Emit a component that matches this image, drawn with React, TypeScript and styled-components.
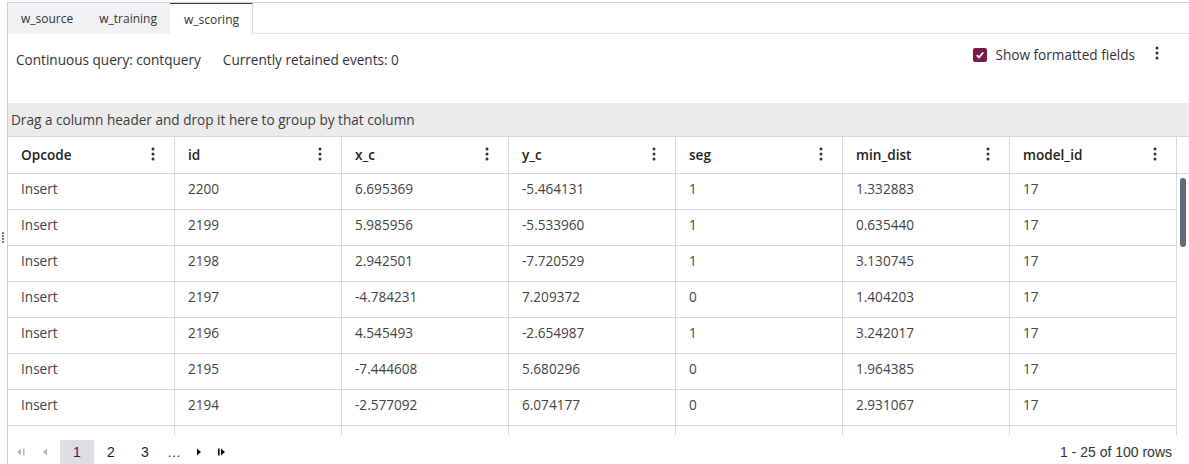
import React from "react";
import styled, { createGlobalStyle } from "styled-components";

const Global = createGlobalStyle`
  html, body { margin: 0; padding: 0; background: #fff; }
  body { font-family: "Open Sans", "Noto Sans", sans-serif; color: #333; overflow: hidden; }
  * { box-sizing: border-box; }
`;

const Page = styled.div`
  position: relative;
  margin: 2px 0 0 7px;
  border-top: 1px solid #cfd4dc;
  border-left: 1px solid #cfd4dc;
  height: 462px;
  overflow: hidden;
  display: flex;
  flex-direction: column;
`;

const TabBar = styled.div`
  display: flex;
  height: 31px;
  flex: none;
`;

const Tab = styled.div<{ $active?: boolean }>`
  height: 31px;
  padding: 0 13px 0 ${(p) => (p.$active ? 14 : 13)}px;
  display: flex;
  align-items: center;
  font-size: 12px;
  color: #333;
  background: ${(p) => (p.$active ? "#fff" : "#f1f2f4")};
  border-top: 1px solid ${(p) => (p.$active ? "#3a3f47" : "#f1f2f4")};
  border-right: ${(p) => (p.$active ? "1px solid #d6d9de" : "none")};
  border-bottom: ${(p) => (p.$active ? "none" : "1px solid #f1f2f4")};
`;

const TabFill = styled.div`
  flex: 1;
  border-bottom: 1px solid #e3e5e8;
`;

const InfoRow = styled.div`
  height: 69px;
  flex: none;
  display: flex;
  align-items: flex-start;
  padding: 15px 0 0 8px;
  font-size: 13.6px;
  color: #333;
`;

const InfoText = styled.span`
  margin-right: 22px;
  line-height: 20px;
  margin-top: 1px;
`;

const Spacer = styled.div`
  flex: 1;
`;

const CheckLabel = styled.label`
  display: flex;
  align-items: center;
  gap: 8px;
  font-size: 13.6px;
  color: #333;
  line-height: 20px;
  margin-top: -4px;
`;

const CheckBox = styled.span`
  width: 14px;
  height: 14px;
  border-radius: 2px;
  background: #7a1a4b;
  display: inline-flex;
  align-items: center;
  justify-content: center;
`;

const MenuBtn = styled.span`
  display: inline-flex;
  margin: -3px 30px 0 20px;
`;

const GroupBar = styled.div`
  height: 34px;
  flex: none;
  background: #ebebeb;
  border-bottom: 1px solid #d6d9de;
  display: flex;
  align-items: center;
  padding: 0 0 0 3px;
  font-size: 13.6px;
  color: #3c3c3c;
`;

const COLS = "repeat(7, 167px) 1fr";

const HeaderRow = styled.div`
  display: grid;
  grid-template-columns: ${COLS};
  height: 37px;
  flex: none;
  border-bottom: 1px solid #d6d9de;
`;

const HeadCell = styled.div`
  display: flex;
  align-items: center;
  justify-content: space-between;
  padding: 0 19px 2px 13px;
  border-right: 1px solid #d6d9de;
  font-size: 13.6px;
  font-weight: 600;
  color: #222;
`;

const GutterHead = styled.div``;

const Body = styled.div`
  display: flex;
  height: 261px;
  flex: none;
  overflow: hidden;
`;

const Rows = styled.div`
  width: 1169px;
  flex: none;
`;

const Row = styled.div`
  display: grid;
  grid-template-columns: repeat(7, 167px);
  height: 36px;
  border-bottom: 1px solid #d6d9de;
`;

const Cell = styled.div`
  display: flex;
  align-items: center;
  padding: 0 13px 6px 13px;
  border-right: 1px solid #d6d9de;
  font-size: 13.6px;
  color: #444;
`;

const Gutter = styled.div`
  flex: 1;
  padding: 4px 0 0 3px;
`;

const Thumb = styled.div`
  width: 6px;
  height: 69px;
  border-radius: 3px;
  background: #5f6b7b;
`;

const Footer = styled.div`
  flex: none;
  height: 34px;
  display: flex;
  align-items: center;
  padding: 0 17px 0 0;
  font-family: "Liberation Sans", Arial, sans-serif;
  font-size: 14px;
`;

const PageNav = styled.span<{ $w?: number }>`
  width: ${(p) => p.$w ?? 26}px;
  height: 24px;
  display: inline-flex;
  align-items: center;
  justify-content: center;
`;

const PageNum = styled.span<{ $active?: boolean }>`
  width: 34px;
  height: 30px;
  display: inline-flex;
  align-items: center;
  justify-content: center;
  margin-top: 6px;
  padding-bottom: 6px;
  background: ${(p) => (p.$active ? "#dcdee2" : "transparent")};
  color: ${(p) => (p.$active ? "#4a1a45" : "#222")};
  font-size: 14px;
`;

const RowCount = styled.span`
  margin-left: auto;
  color: #333;
  font-size: 14px;
`;

const Handle = styled.div`
  position: absolute;
  left: 2px;
  top: 232px;
  display: flex;
  flex-direction: column;
  gap: 1px;
`;

const HandleDot = styled.span`
  width: 2px;
  height: 2px;
  background: #777;
`;

const Kebab = ({ color = "#333" }: { color?: string }) => (
  <svg width="4" height="14" viewBox="0 0 4 14">
    <circle cx="2" cy="2" r="1.5" fill={color} />
    <circle cx="2" cy="7" r="1.5" fill={color} />
    <circle cx="2" cy="12" r="1.5" fill={color} />
  </svg>
);

const Tri = ({ dir, bar, color }: { dir: "l" | "r"; bar?: boolean; color: string }) => (
  <svg width="10" height="8" viewBox="0 0 10 8">
    {dir === "l" ? (
      <>
        <polygon points="5,0.5 5,7.5 1,4" fill={color} />
        {bar && <rect x="7" y="0.5" width="1.6" height="7" fill={color} />}
      </>
    ) : (
      <>
        {bar && <rect x="1" y="0.5" width="1.6" height="7" fill={color} />}
        <polygon points="4,0.5 4,7.5 8,4" fill={color} />
      </>
    )}
  </svg>
);

const headers = ["Opcode", "id", "x_c", "y_c", "seg", "min_dist", "model_id"];
const data = [
  ["Insert", "2200", "6.695369", "-5.464131", "1", "1.332883", "17"],
  ["Insert", "2199", "5.985956", "-5.533960", "1", "0.635440", "17"],
  ["Insert", "2198", "2.942501", "-7.720529", "1", "3.130745", "17"],
  ["Insert", "2197", "-4.784231", "7.209372", "0", "1.404203", "17"],
  ["Insert", "2196", "4.545493", "-2.654987", "1", "3.242017", "17"],
  ["Insert", "2195", "-7.444608", "5.680296", "0", "1.964385", "17"],
  ["Insert", "2194", "-2.577092", "6.074177", "0", "2.931067", "17"],
  ["", "", "", "", "", "", ""],
];

export default function App() {
  return (
    <>
      <Global />
      <Page>
        <TabBar>
          <Tab>w_source</Tab>
          <Tab>w_training</Tab>
          <Tab $active>w_scoring</Tab>
          <TabFill />
        </TabBar>
        <InfoRow>
          <InfoText>Continuous query: contquery</InfoText>
          <InfoText>Currently retained events: 0</InfoText>
          <Spacer />
          <CheckLabel>
            <CheckBox>
              <svg width="10" height="10" viewBox="0 0 10 10">
                <path d="M1.8 5.2 L4 7.4 L8.3 2.4" stroke="#fff" strokeWidth="1.8" fill="none" />
              </svg>
            </CheckBox>
            Show formatted fields
          </CheckLabel>
          <MenuBtn>
            <Kebab />
          </MenuBtn>
        </InfoRow>
        <GroupBar>Drag a column header and drop it here to group by that column</GroupBar>
        <HeaderRow>
          {headers.map((h) => (
            <HeadCell key={h}>
              <span>{h}</span>
              <Kebab />
            </HeadCell>
          ))}
          <GutterHead />
        </HeaderRow>
        <Body>
          <Rows>
            {data.map((r, i) => (
              <Row key={i}>
                {r.map((c, j) => (
                  <Cell key={j}>{c}</Cell>
                ))}
              </Row>
            ))}
          </Rows>
          <Gutter>
            <Thumb />
          </Gutter>
        </Body>
        <Footer>
          <PageNav><Tri dir="l" bar color="#b5b8bd" /></PageNav>
          <PageNav><Tri dir="l" color="#b5b8bd" /></PageNav>
          <PageNum $active>1</PageNum>
          <PageNum>2</PageNum>
          <PageNum>3</PageNum>
          <PageNav $w={24}>…</PageNav>
          <PageNav $w={24}><Tri dir="r" color="#111" /></PageNav>
          <PageNav $w={24}><Tri dir="r" bar color="#111" /></PageNav>
          <RowCount>1 - 25 of 100 rows</RowCount>
        </Footer>
      </Page>
      <Handle>
        <HandleDot />
        <HandleDot />
        <HandleDot />
        <HandleDot />
      </Handle>
    </>
  );
}
